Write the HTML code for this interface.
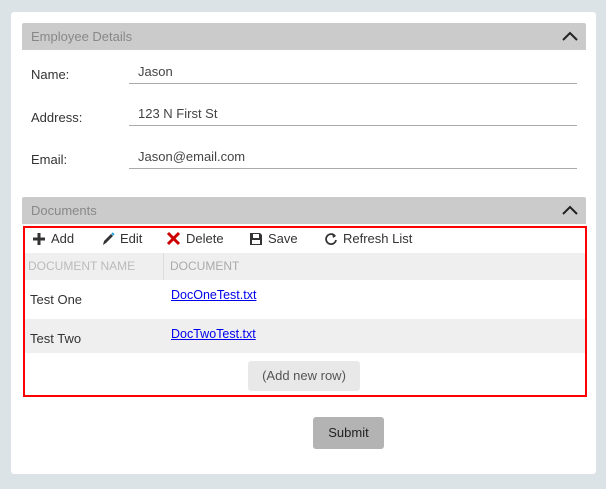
<!DOCTYPE html>
<html><head><style>
*{box-sizing:border-box;margin:0;padding:0}
body{width:606px;height:489px;background:#dce3e6;font-family:"Liberation Sans",sans-serif;position:relative;overflow:hidden;color:#333}
.card{position:absolute;left:11px;top:12px;width:585px;height:462px;background:#fff;border-radius:3px}
.hdr{position:absolute;left:22px;width:564px;height:27px;background:#cbcbcb;color:#888;font-size:13px;line-height:27px;padding-left:9px;border-radius:2px 2px 0 0}
.hdr svg{position:absolute;right:8px;top:8px}
.lbl{position:absolute;left:31px;font-size:13px;color:#333}
.inp{position:absolute;left:129px;width:448px;border-bottom:1px solid #aaa;font-size:13px;color:#444;padding-left:9px;height:20px}
.red{position:absolute;left:23px;top:226px;width:564px;height:171px;border:2px solid #f00}
.tb{position:absolute;top:231px;font-size:13px;color:#333;display:flex;align-items:center;gap:5px}
.gh{position:absolute;left:25px;top:253px;width:560px;height:27px;background:#efefef;font-size:12px;color:#aaa;line-height:27px}
a{color:#00e;text-decoration:underline;font-size:12.5px}
</style></head><body>
<div class="card"></div>
<div class="hdr" style="top:23px">Employee Details<svg width="16" height="10" viewBox="0 0 16 10"><path d="M1 9L8 2L15 9" stroke="#222" stroke-width="2" fill="none"/></svg></div>
<div class="lbl" style="top:67px">Name:</div><div class="inp" style="top:64px">Jason</div>
<div class="lbl" style="top:110px">Address:</div><div class="inp" style="top:106px">123 N First St</div>
<div class="lbl" style="top:152px">Email:</div><div class="inp" style="top:149px">Jason@email.com</div>
<div class="hdr" style="top:197px">Documents<svg width="16" height="10" viewBox="0 0 16 10"><path d="M1 9L8 2L15 9" stroke="#222" stroke-width="2" fill="none"/></svg></div>
<div class="red"></div>
<div class="tb" style="left:32px"><svg width="14" height="14"><path d="M7 1V13M1 7H13" stroke="#333" stroke-width="3"/></svg>Add</div>
<div class="tb" style="left:101px"><svg width="14" height="14"><path d="M2 13L3 9L10 2L12 4L5 11Z" fill="#333"/><path d="M11 1L13 3" stroke="#29a9e0" stroke-width="2"/></svg>Edit</div>
<div class="tb" style="left:166px"><svg width="15" height="15"><path d="M2 2L13 13M13 2L2 13" stroke="#c00" stroke-width="3"/></svg>Delete</div>
<div class="tb" style="left:249px"><svg width="14" height="14"><path d="M1 1H11L13 3V13H1Z" fill="#333"/><rect x="4" y="2" width="6" height="4" fill="#fff"/><rect x="3" y="8" width="8" height="4" fill="#fff"/></svg>Save</div>
<div class="tb" style="left:324px"><svg width="14" height="14"><path d="M11 4A5 5 0 1 0 12 8" stroke="#333" stroke-width="1.8" fill="none"/><path d="M8 1L12 4L9 6Z" fill="#333"/></svg>Refresh List</div>
<div class="gh"><span style="position:absolute;left:3px;color:#bbb">DOCUMENT NAME</span><span style="position:absolute;left:138px;top:0;height:27px;border-left:1px solid #ddd"></span><span style="position:absolute;left:145px">DOCUMENT</span></div>
<div style="position:absolute;left:30px;top:292px;font-size:13px">Test One</div>
<a style="position:absolute;left:171px;top:288px">DocOneTest.txt</a>
<div style="position:absolute;left:25px;top:319px;width:560px;height:34px;background:#efefef"></div>
<div style="position:absolute;left:30px;top:331px;font-size:13px">Test Two</div>
<a style="position:absolute;left:171px;top:327px">DocTwoTest.txt</a>
<div style="position:absolute;left:248px;top:361px;width:112px;height:30px;background:#e8e8e8;border-radius:3px;font-size:13px;color:#555;text-align:center;line-height:30px">(Add new row)</div>
<div style="position:absolute;left:313px;top:417px;width:71px;height:32px;background:#b3b3b3;border-radius:3px;font-size:13px;color:#222;text-align:center;line-height:32px">Submit</div>
</body></html>
